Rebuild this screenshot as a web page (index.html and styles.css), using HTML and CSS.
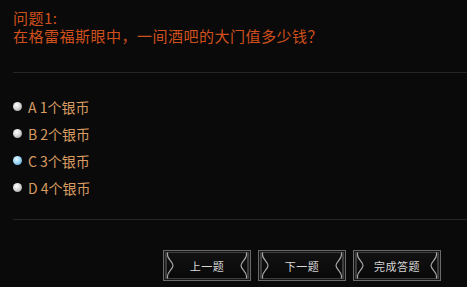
FILE: index.html
```html
<!DOCTYPE html>
<html lang="zh-CN">
<head>
<meta charset="utf-8">
<title>问题</title>
<link rel="stylesheet" href="styles.css">
</head>
<body>
<div class="panel">
  <div class="question">
    <div class="q-no">问题1:</div>
    <div class="q-text">在格雷福斯眼中，一间酒吧的大门值多少钱？</div>
  </div>
  <div class="divider"></div>
  <ul class="options">
    <li class="option"><span class="radio"></span><span class="opt-text">A 1个银币</span></li>
    <li class="option"><span class="radio"></span><span class="opt-text">B 2个银币</span></li>
    <li class="option"><span class="radio radio-on"></span><span class="opt-text">C 3个银币</span></li>
    <li class="option"><span class="radio"></span><span class="opt-text">D 4个银币</span></li>
  </ul>
  <div class="divider divider-low"></div>
  <div class="buttons">
    <div class="btn">
      <svg class="brk" width="9" height="27" viewBox="0 0 9 27"><path d="M1.5 0.5 V3 C1.5 7, 7 10, 7 13.5 C7 17, 1.5 20, 1.5 24 V26.5" fill="none" stroke="#a8a8a8" stroke-width="1.2"/><path d="M0.5 1 V26" fill="none" stroke="#3d3d3d" stroke-width="1"/></svg>
      <span class="btn-text">上一题</span>
      <svg class="brk" width="9" height="27" viewBox="0 0 9 27"><path d="M7.5 0.5 V3 C7.5 7, 2 10, 2 13.5 C2 17, 7.5 20, 7.5 24 V26.5" fill="none" stroke="#a8a8a8" stroke-width="1.2"/><path d="M8.5 1 V26" fill="none" stroke="#3d3d3d" stroke-width="1"/></svg>
    </div>
    <div class="btn">
      <svg class="brk" width="9" height="27" viewBox="0 0 9 27"><path d="M1.5 0.5 V3 C1.5 7, 7 10, 7 13.5 C7 17, 1.5 20, 1.5 24 V26.5" fill="none" stroke="#a8a8a8" stroke-width="1.2"/><path d="M0.5 1 V26" fill="none" stroke="#3d3d3d" stroke-width="1"/></svg>
      <span class="btn-text">下一题</span>
      <svg class="brk" width="9" height="27" viewBox="0 0 9 27"><path d="M7.5 0.5 V3 C7.5 7, 2 10, 2 13.5 C2 17, 7.5 20, 7.5 24 V26.5" fill="none" stroke="#a8a8a8" stroke-width="1.2"/><path d="M8.5 1 V26" fill="none" stroke="#3d3d3d" stroke-width="1"/></svg>
    </div>
    <div class="btn">
      <svg class="brk" width="9" height="27" viewBox="0 0 9 27"><path d="M1.5 0.5 V3 C1.5 7, 7 10, 7 13.5 C7 17, 1.5 20, 1.5 24 V26.5" fill="none" stroke="#a8a8a8" stroke-width="1.2"/><path d="M0.5 1 V26" fill="none" stroke="#3d3d3d" stroke-width="1"/></svg>
      <span class="btn-text">完成答题</span>
      <svg class="brk" width="9" height="27" viewBox="0 0 9 27"><path d="M7.5 0.5 V3 C7.5 7, 2 10, 2 13.5 C2 17, 7.5 20, 7.5 24 V26.5" fill="none" stroke="#a8a8a8" stroke-width="1.2"/><path d="M8.5 1 V26" fill="none" stroke="#3d3d3d" stroke-width="1"/></svg>
    </div>
  </div>
</div>
</body>
</html>
```
FILE: styles.css
```css
html, body {
  margin: 0;
  padding: 0;
  background: #0a0a0a;
  width: 467px;
  height: 287px;
  overflow: hidden;
}
.panel {
  padding-left: 13px;
  font-family: "Noto Sans CJK SC", "Noto Sans", sans-serif;
}
.question {
  padding-top: 9px;
  color: #d0501c;
  font-size: 15px;
  line-height: 18px;
  letter-spacing: 0.5px;
}
.divider {
  margin-top: 27px;
  height: 1px;
  background: #262626;
}
.divider-low {
  margin-top: 18px;
}
.options {
  list-style: none;
  margin: 0;
  padding: 20px 0 0 0;
}
.option {
  display: flex;
  align-items: center;
  height: 27px;
}
.radio {
  width: 9px;
  height: 9px;
  border-radius: 50%;
  background: radial-gradient(circle at 40% 35%, #ffffff 0%, #d8d8d8 45%, #8a8a8a 100%);
  margin-right: 6px;
}
.radio-on {
  background: radial-gradient(circle at 40% 35%, #e8f8ff 0%, #9fd8f8 45%, #4f9ccc 100%);
}
.opt-text {
  color: #d89c62;
  font-size: 14px;
}
.buttons {
  display: flex;
  justify-content: flex-end;
  gap: 7px;
  margin-top: 30px;
  padding-right: 26px;
}
.btn {
  width: 88px;
  height: 31px;
  box-sizing: border-box;
  border: 1px solid #6a6a6a;
  box-shadow: inset 0 0 0 1px #151515, inset 0 0 0 2px #3e3e3e;
  background: linear-gradient(#121212, #080808);
  display: flex;
  align-items: center;
  justify-content: space-between;
  padding: 0 2px;
}
.brk {
  display: block;
}
.btn-text {
  color: #d8d8d8;
  font-size: 11px;
  letter-spacing: 0.5px;
}
```
